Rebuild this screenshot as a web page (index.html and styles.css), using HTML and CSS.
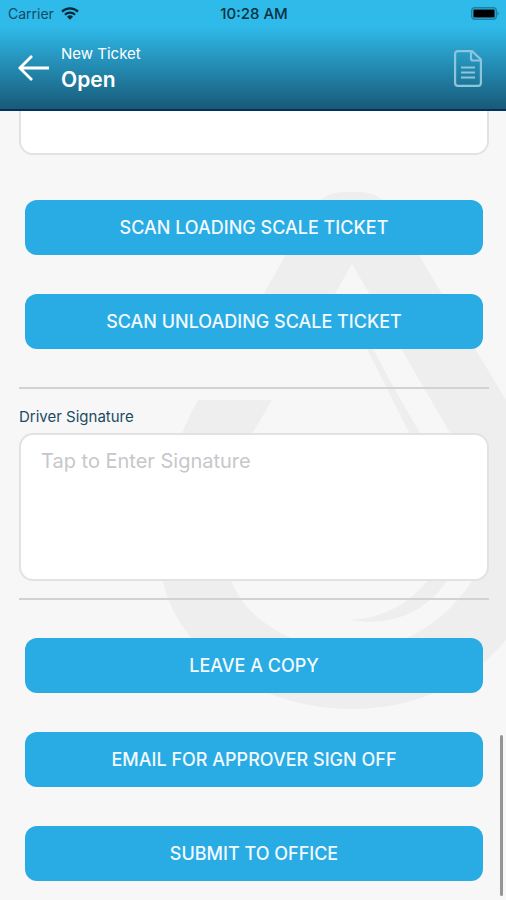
FILE: index.html
```html
<!DOCTYPE html>
<html lang="en">

<head>
    <meta charset="UTF-8">
    <meta name="viewport" content="width=device-width, initial-scale=1">
    <title>New Ticket</title>
    <link rel="stylesheet" href="styles.css">
</head>

<body>

    <header class="top">
        <div class="status">
            <div class="carrier">
                <span>Carrier</span>
                <svg width="18" height="13" viewBox="0 0 18 13" aria-hidden="true">
                    <path d="M1 4.6a11.6 11.6 0 0 1 16 0" fill="none" stroke="#052a3a" stroke-width="2.4" />
                    <path d="M3.9 7.7a7.4 7.4 0 0 1 10.2 0" fill="none" stroke="#052a3a" stroke-width="2.2" />
                    <path d="M9 12.8L6 9.8a4.3 4.3 0 0 1 6 0z" fill="#052a3a" />
                </svg>
            </div>
            <span class="time">10:28 AM</span>
            <svg class="battery" width="29" height="13" viewBox="0 0 29 13" aria-hidden="true">
                <rect x="0.7" y="0.7" width="24.6" height="11.6" rx="3" fill="none" stroke="#1d7fa3" stroke-width="1.4" />
                <rect x="2.4" y="2.4" width="21.2" height="8.2" rx="1" fill="#000" />
                <path d="M26.4 4.3c1.6.6 1.6 3.8 0 4.4z" fill="#1d7fa3" />
            </svg>
        </div>

        <div class="nav">
            <a href="#" class="back" aria-label="Back">
                <svg width="31" height="26" viewBox="0 0 31 26" aria-hidden="true">
                    <path d="M14 1L1.8 13 14 25M1.8 13H31" fill="none" stroke="#fff" stroke-width="2.8" stroke-linejoin="round" />
                </svg>
            </a>
            <h1 class="title">
                <span class="title-small">New Ticket</span>
                <span class="title-big">Open</span>
            </h1>
            <button type="button" class="doc" aria-label="Documents">
                <svg width="28" height="37" viewBox="0 0 28 37" aria-hidden="true">
                    <g fill="none" stroke="#8cc5dc" stroke-width="2.2" stroke-linejoin="round">
                        <path d="M4 1.1h14L26.9 9.5V33a3 3 0 0 1-3 2.9H4a3 3 0 0 1-2.9-2.9V4A3 3 0 0 1 4 1.1z" />
                        <path d="M17 1.1v7.4a2 2 0 0 0 2 2h7.9" />
                        <path d="M7 17.5h14M7 22.5h14M7 27.5h14" />
                    </g>
                </svg>
            </button>
        </div>
    </header>

    <main class="content">

        <!-- drop logo behind the form -->
        <svg class="watermark" width="356" height="520" viewBox="150 190 356 520" aria-hidden="true">
            <g fill="#eeeeee">
                <path d="M246 325L310 212Q322 192 345 192H358Q381 192 393 212L506 400V640C470 684 415 709 350 709C250 709 170 640 162 575C158 525 165 458 198 400H272L243 450C222 490 220 550 231 580C246 622 298 650 350 650C408 650 450 615 472 581C500 535 488 500 450 433L352 264L317 325Z" />
                <path d="M355 325L409 433C440 490 455 535 428 580C410 603 384 618 350 620C390 627 425 613 447 581C475 530 458 500 420 433L395 390L372 347Z" />
            </g>
        </svg>

        <form class="form">
            <textarea class="box box-cut" aria-label="Notes"></textarea>

            <div class="buttons">
                <button type="button" class="button">SCAN LOADING SCALE TICKET</button>
                <button type="button" class="button">SCAN UNLOADING SCALE TICKET</button>
            </div>

            <div class="signature">
                <label for="signature">Driver Signature</label>
                <textarea id="signature" class="box" placeholder="Tap to Enter Signature"></textarea>
            </div>

            <div class="buttons">
                <button type="button" class="button">LEAVE A COPY</button>
                <button type="button" class="button">EMAIL FOR APPROVER SIGN OFF</button>
                <button type="submit" class="button">SUBMIT TO OFFICE</button>
            </div>
        </form>
    </main>

    <div class="scrollbar"></div>

</body>

</html>
```
FILE: styles.css
```css
* {
    box-sizing: border-box;
}

body {
    margin: 0;
    background: #f7f7f7;
    font-family: Inter, "Liberation Sans", sans-serif;
    color: #1c4a63;
}

/* Header */

.top {
    height: 111px;
    background: linear-gradient(#2fbbea 0, #2fbaea 26px, #185a78 109px);
    border-bottom: 2px solid #06305c;
}

.status {
    display: grid;
    grid-template-columns: 1fr auto 1fr;
    align-items: center;
    height: 26px;
    padding: 0 6px 0 8px;
    font-size: 14px;
}

.carrier {
    display: flex;
    align-items: center;
    gap: 7px;
    color: #0f4a63;
}

.time {
    color: #07303f;
    font-size: 15px;
    font-weight: 500;
}

.battery {
    justify-self: end;
}

.nav {
    display: flex;
    align-items: center;
    height: 84px;
    padding: 0 24px 0 18px;
}

.back {
    display: flex;
}

.title {
    flex: 1;
    display: flex;
    flex-direction: column;
    margin: 0 0 0 12px;
    color: #fff;
}

.title-small {
    font-size: 15px;
    font-weight: 400;
    line-height: 24px;
}

.title-big {
    font-size: 21px;
    font-weight: 600;
    line-height: 28px;
}

.doc {
    display: flex;
    padding: 0;
    border: 0;
    background: none;
    cursor: pointer;
}

/* Form */

.content {
    position: relative;
}

.watermark {
    position: absolute;
    top: 79px;
    right: 0;
}

.form {
    position: relative;
    padding: 0 17px 19px 19px;
}

.box {
    display: block;
    width: 100%;
    height: 148px;
    padding: 14px 20px;
    border: 2px solid #e2e2e2;
    border-radius: 14px;
    background: #fff;
    color: #1c4a63;
    font-family: inherit;
    font-size: 20px;
    line-height: 24px;
    resize: none;
    outline: 0;
}

.box::placeholder {
    color: #c7c7cb;
    opacity: 1;
}

/* scrolled halfway under the header */
.box-cut {
    height: 44px;
    border-top: 0;
    border-radius: 0 0 14px 14px;
}

.buttons {
    display: flex;
    flex-direction: column;
    gap: 39px;
    padding: 45px 6px 38px;
}

.button {
    height: 55px;
    border: 0;
    border-radius: 12px;
    background: #29abe4;
    color: #f2faff;
    font-family: inherit;
    font-size: 18px;
    font-weight: 500;
    cursor: pointer;
}

.signature {
    padding: 17px 0;
    border: solid #d2d2d2;
    border-width: 2px 0;
}

.signature label {
    display: block;
    padding-bottom: 5px;
    font-size: 15px;
    line-height: 22px;
}

.signature + .buttons {
    padding: 38px 6px 0;
}

/* Scroll position */

.scrollbar {
    position: fixed;
    right: 3px;
    bottom: 4px;
    width: 3px;
    height: 161px;
    border-radius: 2px;
    background: #959595;
}
```
